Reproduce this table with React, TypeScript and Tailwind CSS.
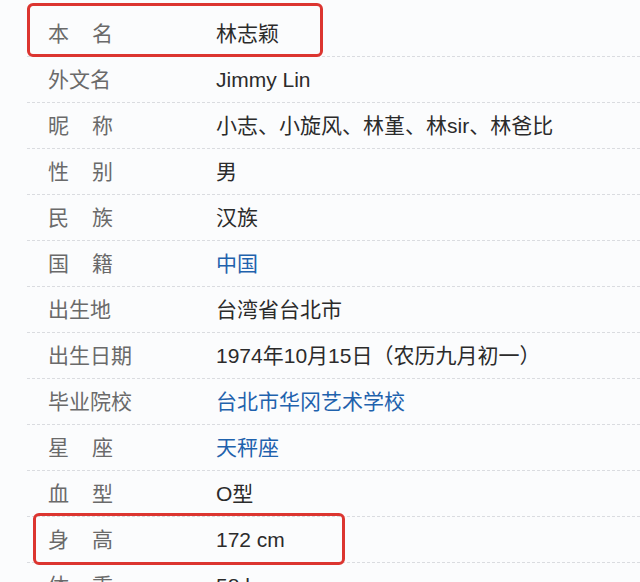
import React from "react";

type Row = { label: string; value: string; link?: boolean; mark?: "top" | "height" };

const ROWS: Row[] = [
  { label: "本名", value: "林志颖", mark: "top" },
  { label: "外文名", value: "Jimmy Lin" },
  { label: "昵称", value: "小志、小旋风、林堇、林sir、林爸比" },
  { label: "性别", value: "男" },
  { label: "民族", value: "汉族" },
  { label: "国籍", value: "中国", link: true },
  { label: "出生地", value: "台湾省台北市" },
  { label: "出生日期", value: "1974年10月15日（农历九月初一）" },
  { label: "毕业院校", value: "台北市华冈艺术学校", link: true },
  { label: "星座", value: "天秤座", link: true },
  { label: "血型", value: "O型" },
  { label: "身高", value: "172 cm", mark: "height" },
  { label: "体重", value: "58 kg" },
];

function Label({ text }: { text: string }) {
  // two-char labels are spread over the width of three chars
  if (text.length === 2) {
    return (
      <span className="flex w-[65px] justify-between">
        <span>{text[0]}</span>
        <span>{text[1]}</span>
      </span>
    );
  }
  return <span>{text}</span>;
}

export default function App() {
  return (
    <main
      className="h-[582px] w-[640px] overflow-hidden bg-[#fbfcfd] pt-[11px] text-[21px] leading-none"
      style={{ fontFamily: '"Liberation Sans", "Noto Sans CJK SC", sans-serif' }}
    >
      {ROWS.map((r) => (
        <div
          key={r.label}
          className="relative ml-[27px] flex h-[46px] items-center border-b border-dashed border-[#dadce0]"
        >
          <div className="w-[189px] pl-[21px] text-[#6a6a6a]">
            <Label text={r.label} />
          </div>
          <div className={r.link ? "text-[#1f62ad]" : "text-[#2b2b2b]"}>{r.value}</div>

          {/* red highlight boxes */}
          {r.mark === "top" && (
            <div className="absolute left-0 top-[-8px] h-[54px] w-[296px] rounded-[6px] border-[3px] border-[#dc3530]" />
          )}
          {r.mark === "height" && (
            <div className="absolute left-[6px] top-[-4px] h-[52px] w-[312px] rounded-[6px] border-[3px] border-[#dc3530]" />
          )}
        </div>
      ))}
    </main>
  );
}
